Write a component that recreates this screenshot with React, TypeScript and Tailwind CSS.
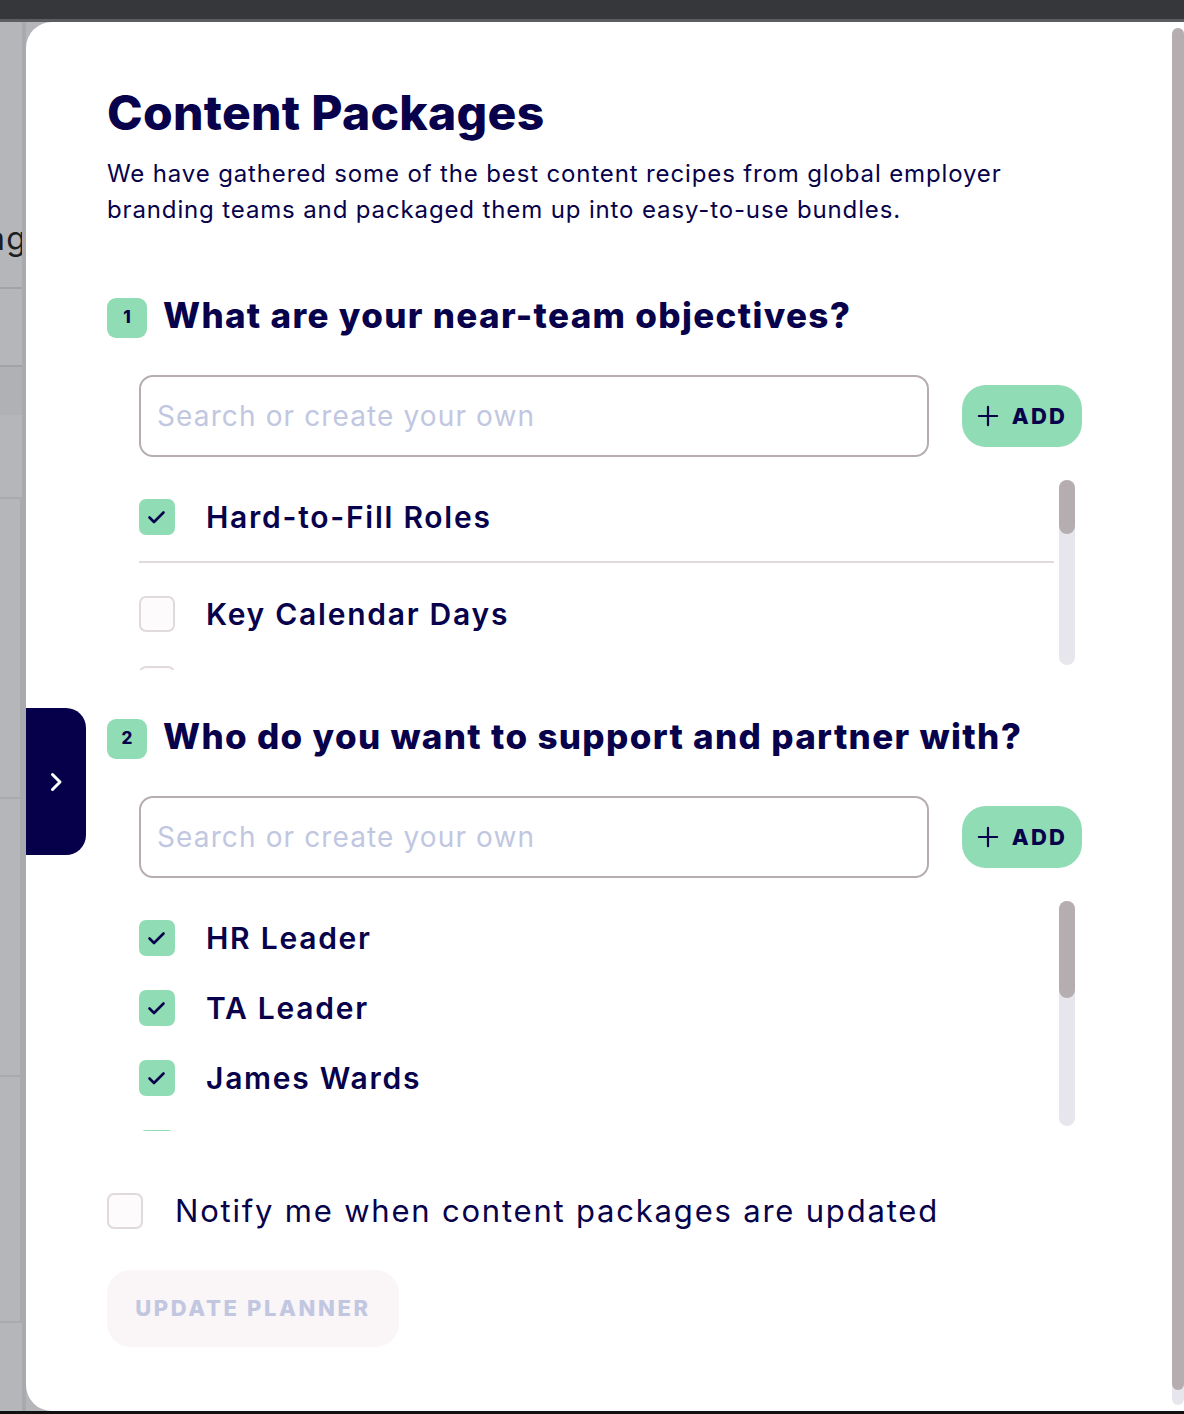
import { useState } from 'react'

const navy = 'text-[#07024b]'

const objectives = [
  { label: 'Hard-to-Fill Roles', checked: true },
  { label: 'Key Calendar Days', checked: false },
  { label: 'Employee Advocacy', checked: false },
]

const partners = [
  { label: 'HR Leader', checked: true },
  { label: 'TA Leader', checked: true },
  { label: 'James Wards', checked: true },
  { label: 'Hiring Managers', checked: true },
]

function Check({ checked }: { checked: boolean }) {
  return (
    <span
      className={`flex h-[36px] w-[36px] shrink-0 items-center justify-center rounded-[7px] border-2 ${
        checked ? 'border-[#90dcb5] bg-[#90dcb5]' : 'border-[#e0dadc] bg-[#fdfbfb]'
      }`}
    >
      {checked && (
        <svg width="24" height="24" viewBox="0 0 24 24" fill="none">
          <path d="M4.5 12.5l4.5 4.5 9.5-9.5" stroke="#07024b" strokeWidth="2.6" strokeLinecap="round" strokeLinejoin="round" />
        </svg>
      )}
    </span>
  )
}

function SectionTitle({ n, children }: { n: number; children: string }) {
  return (
    <div className="flex h-[40px] items-start gap-[16px]">
      <span className={`flex h-[40px] w-[40px] shrink-0 items-center justify-center rounded-[9px] bg-[#90dcb5] text-[17px] font-extrabold ${navy}`}>
        {n}
      </span>
      <h2 className={`text-[35px] font-extrabold leading-[34px] tracking-[0.038em] ${navy}`}>{children}</h2>
    </div>
  )
}

function SearchRow() {
  return (
    <div className="ml-[32px] flex items-center gap-[33px]">
      <input
        placeholder="Search or create your own"
        className={`h-[82px] w-[790px] rounded-[14px] border-2 border-[#b6adb0] px-[16px] text-[28px] tracking-[0.04em] outline-none placeholder:text-[#c1c7e1] ${navy}`}
      />
      <button className={`flex h-[62px] w-[120px] items-center justify-center gap-[13px] rounded-[24px] bg-[#90dcb5] ${navy}`}>
        <svg width="22" height="22" viewBox="0 0 24 24" fill="none">
          <path d="M12 2v20M2 12h20" stroke="#07024b" strokeWidth="2.4" strokeLinecap="round" />
        </svg>
        <span className="text-[22px] font-extrabold tracking-[0.1em]">ADD</span>
      </button>
    </div>
  )
}

function Scrollbar({ thumb }: { thumb: string }) {
  return (
    <div className="flex w-[16px] shrink-0 flex-col self-stretch pb-[5px]">
      <div className="flex flex-1 flex-col rounded-full bg-[#e6e6ec]">
        <div className={`${thumb} rounded-full bg-[#b6adb0]`} />
      </div>
    </div>
  )
}

function ItemRow({ label, checked }: { label: string; checked: boolean }) {
  return (
    <div className="flex h-[70px] shrink-0 items-center gap-[31px]">
      <Check checked={checked} />
      <span className={`text-[30px] font-semibold tracking-[0.058em] ${navy}`}>{label}</span>
    </div>
  )
}

export default function App() {
  const [notify] = useState(false)

  return (
    <div className="flex h-[1414px] w-[1184px] flex-col overflow-hidden bg-[#b5b6ba] font-['Inter',sans-serif]">
      <div className="h-[19px] shrink-0 bg-[#36373b]" />
      <div className="h-[3px] shrink-0 bg-[#5c5d61]" />

      <div className="flex min-h-0 flex-1">
        {/* page behind the drawer */}
        <div className="relative w-[26px] shrink-0 overflow-hidden border-r-[4px] border-[#a9aaae]">
          <div className="absolute left-[-13px] top-[193px] text-[32px] tracking-[0.04em] text-[#1d1e22]">ag</div>
          <div className="absolute left-0 right-0 top-[265px] h-[2px] bg-[#a2a3a7]" />
          <div className="absolute left-0 right-0 top-[343px] h-[50px] border-t-2 border-[#a2a3a7] bg-[#b0b1b5]" />
          <div className="absolute left-0 right-0 top-[475px] h-[826px] border-y-2 border-r-2 border-[#a9aaae]" />
          <div className="absolute left-0 right-0 top-[775px] h-[2px] bg-[#a9aaae]" />
          <div className="absolute left-0 right-0 top-[1053px] h-[2px] bg-[#a9aaae]" />
        </div>

        <div className="relative flex h-[1389px] flex-1 rounded-l-[26px] bg-white">
          <button className="absolute left-0 top-[686px] flex h-[147px] w-[60px] items-center justify-center rounded-r-[20px] bg-[#06004a]">
            <svg width="24" height="24" viewBox="0 0 24 24" fill="none">
              <path d="M8.5 4.5l7.5 7.5-7.5 7.5" stroke="white" strokeWidth="3" strokeLinecap="round" strokeLinejoin="round" />
            </svg>
          </button>

          <div className="flex flex-1 flex-col pl-[81px] pt-[67px]">
            <h1 className={`text-[48px] font-extrabold leading-[48px] tracking-[0.006em] ${navy}`}>Content Packages</h1>
            <p className={`mt-[19px] w-[960px] text-[24px] leading-[36px] tracking-[0.036em] ${navy}`}>
              We have gathered some of the best content recipes from global employer branding teams and packaged them up into easy-to-use bundles.
            </p>

            <div className="mt-[70px]">
              <SectionTitle n={1}>What are your near-team objectives?</SectionTitle>
            </div>
            <div className="mt-[37px]">
              <SearchRow />
            </div>
            <div className="ml-[32px] mt-[23px] flex h-[190px] w-[936px] gap-[5px]">
              <div className="flex flex-1 flex-col overflow-hidden pt-[2px]">
                <ItemRow {...objectives[0]} />
                <div className="mb-[16px] mt-[9px] h-[2px] shrink-0 bg-[#e0dadc]" />
                {objectives.slice(1).map(o => (
                  <ItemRow key={o.label} {...o} />
                ))}
              </div>
              <Scrollbar thumb="h-[54px]" />
            </div>

            <div className="mt-[49px]">
              <SectionTitle n={2}>Who do you want to support and partner with?</SectionTitle>
            </div>
            <div className="mt-[37px]">
              <SearchRow />
            </div>
            <div className="ml-[32px] mt-[22px] flex h-[231px] w-[936px] gap-[5px]">
              <div className="flex flex-1 flex-col overflow-hidden pt-[3px]">
                {partners.map(p => (
                  <ItemRow key={p.label} {...p} />
                ))}
              </div>
              <div className="flex pt-[1px]">
                <Scrollbar thumb="h-[97px]" />
              </div>
            </div>

            <label className="mt-[62px] flex items-center gap-[32px]">
              <Check checked={notify} />
              <span className={`text-[31px] leading-[36px] tracking-[0.058em] ${navy}`}>Notify me when content packages are updated</span>
            </label>

            <button className="mt-[41px] flex h-[77px] w-[292px] items-center justify-center rounded-[24px] bg-[#faf5f6] text-[22px] font-extrabold tracking-[0.12em] text-[#c1c7e1]">
              UPDATE PLANNER
            </button>
          </div>

          <div className="flex w-[12px] shrink-0 flex-col pb-[6px] pt-[6px]">
            <div className="flex flex-1 flex-col rounded-full bg-[#e6e6ec]">
              <div className="h-[1362px] rounded-full bg-[#b6adb0]" />
            </div>
          </div>
        </div>
      </div>

      <div className="h-[3px] shrink-0 bg-[#111]" />
    </div>
  )
}
